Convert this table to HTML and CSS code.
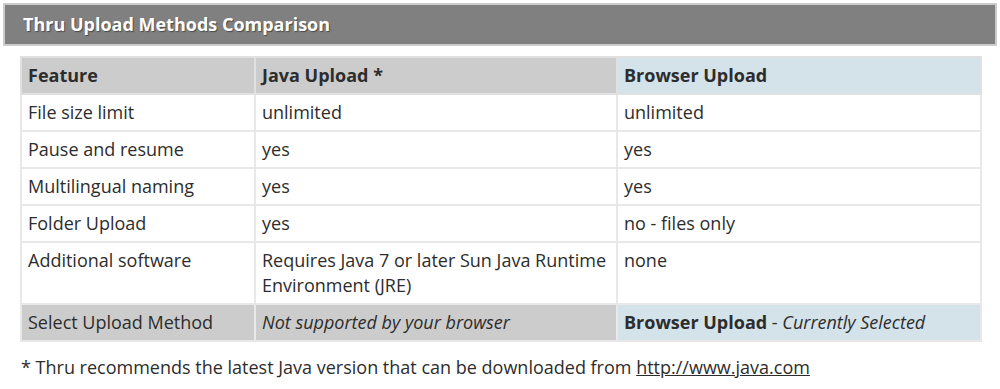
FILE: index.html
```html
<!DOCTYPE html>
<html>
<head>
<meta charset="utf-8">
<link rel="stylesheet" href="styles.css">
</head>
<body>
<div class="page">
  <h2 class="title-bar">Thru Upload Methods Comparison</h2>
  <table class="compare">
    <colgroup>
      <col class="c1"><col class="c2"><col class="c3">
    </colgroup>
    <tr class="head">
      <th>Feature</th>
      <th>Java Upload *</th>
      <th class="sel">Browser Upload</th>
    </tr>
    <tr><td>File size limit</td><td>unlimited</td><td>unlimited</td></tr>
    <tr><td>Pause and resume</td><td>yes</td><td>yes</td></tr>
    <tr><td>Multilingual naming</td><td>yes</td><td>yes</td></tr>
    <tr><td>Folder Upload</td><td>yes</td><td>no - files only</td></tr>
    <tr><td>Additional software</td><td>Requires Java 7 or later Sun Java Runtime Environment (JRE)</td><td>none</td></tr>
    <tr class="foot">
      <td>Select Upload Method</td>
      <td><em>Not supported by your browser</em></td>
      <td class="sel"><strong>Browser Upload</strong> - <em>Currently Selected</em></td>
    </tr>
  </table>
  <p class="note">* Thru recommends the latest Java version that can be downloaded from <a href="#">http://www.java.com</a></p>
</div>
</body>
</html>
```

FILE: styles.css
```css
html, body {
  margin: 0;
  padding: 0;
  background: #fff;
}
body {
  font-family: "Open Sans", "Liberation Sans", sans-serif;
  color: #2d2d2d;
}
.page {
  padding: 3px;
}
.title-bar {
  margin: 0;
  background: #808080;
  border: 2px solid #cccccc;
  color: #fff;
  font-size: 18px;
  font-weight: 700;
  line-height: 39px;
  height: 39px;
  padding: 0 0 0 18px;
  text-shadow: 1px 1px 1px #4a4a4a;
}
.compare {
  margin: 10px 0 0 17px;
  border-collapse: collapse;
  font-size: 18px;
  line-height: 25px;
}
.c1 { width: 234px; }
.c2 { width: 362px; }
.c3 { width: 364px; }
.compare th,
.compare td {
  border: 2px solid #e8e8e8;
  padding: 5px 6px;
  text-align: left;
  vertical-align: top;
}
.compare th {
  font-weight: 700;
}
.compare .head th,
.compare .foot td {
  background: #cccccc;
  border-color: #e0e0e0;
}
.compare .head th.sel,
.compare .foot td.sel {
  background: #d4e2ea;
}
.compare .foot td {
  border-color: #e8e8e8;
}
.note {
  margin: 13px 0 0 18px;
  font-size: 18px;
  line-height: 25px;
}
.note a {
  color: #2d2d2d;
  text-decoration: underline;
}
```
